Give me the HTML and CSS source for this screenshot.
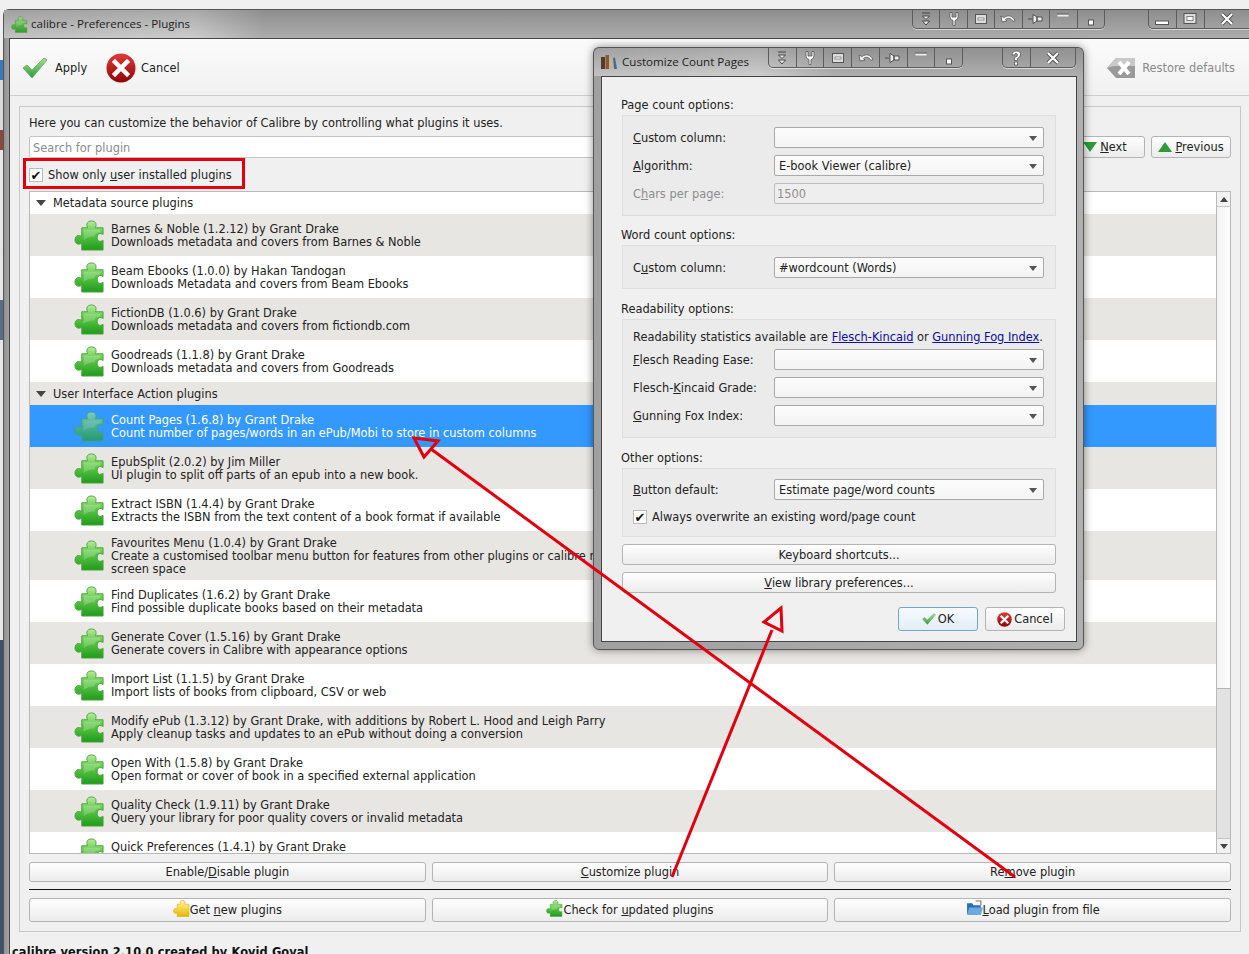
FILE: index.html
```html
<!DOCTYPE html>
<html lang="en">
<head>
<meta charset="utf-8">
<title>calibre - Preferences - Plugins</title>
<link rel="stylesheet" href="styles.css">
</head>
<body>
<svg class="defs" width="0" height="0" aria-hidden="true">
  <defs>
    <linearGradient id="gGreen" x1="0" y1="0" x2="0" y2="1">
      <stop offset="0" stop-color="#b9ecA0"/><stop offset=".4" stop-color="#62c94a"/><stop offset="1" stop-color="#1f9a1c"/>
    </linearGradient>
    <linearGradient id="gYellow" x1="0" y1="0" x2="0" y2="1">
      <stop offset="0" stop-color="#fff6a0"/><stop offset="1" stop-color="#e8b800"/>
    </linearGradient>
    <linearGradient id="gRed" x1="0" y1="0" x2="0" y2="1">
      <stop offset="0" stop-color="#e23a3a"/><stop offset="1" stop-color="#8e0505"/>
    </linearGradient>
    <linearGradient id="gCheck" x1="0" y1="0" x2="0" y2="1">
      <stop offset="0" stop-color="#a8e08c"/><stop offset="1" stop-color="#2f9a3a"/>
    </linearGradient>
    <symbol id="puzzle" viewBox="0 0 32 32">
      <path d="M8 8H14C12.500 5 13 1 18 1C23 1 23.500 5 22 8H30V15C27 13 24 14 24 18C24 22 27 23 30 21V31H8V24C5 26 1 25 1 20.500C1 16 5 15 8 17Z" fill="url(#gGreen)" stroke="#4aa53c" stroke-width="1"/>
      <path d="M10 10H27V13C23 12 21 15 21 17C15 17 11 19 10 21Z" fill="#fff" opacity=".22"/>
    </symbol>
    <symbol id="puzzleY" viewBox="0 0 32 32">
      <path d="M8 8H14C12.500 5 13 1 18 1C23 1 23.500 5 22 8H30V31H8V24C5 26 1 25 1 20.500C1 16 5 15 8 17Z" fill="url(#gYellow)" stroke="#d2a800"/>
    </symbol>
    <symbol id="checkmark" viewBox="0 0 26 22">
      <path d="M1 11L5 8L10 13L22 1L25 3L10 21Z" fill="url(#gCheck)" stroke="#5aa860" stroke-width=".8"/>
    </symbol>
    <symbol id="cross" viewBox="0 0 30 30">
      <circle cx="15" cy="15" r="14.500" fill="url(#gRed)"/>
      <path d="M9 9L21 21M21 9L9 21" stroke="#fff" stroke-width="4.500" stroke-linecap="square"/>
    </symbol>
    <symbol id="i-shade" viewBox="0 0 16 16"><path d="M4 2H12M4.500 5H11.500L8 8.500ZM4.500 10H11.500L8 14Z" fill="#eee" stroke="#444"/></symbol>
    <symbol id="i-wrench" viewBox="0 0 16 16"><path d="M4 1.500V6Q4 9 7 9.500V14.500H9V9.500Q12 9 12 6V1.500H10V6H6V1.500Z" fill="#fff" stroke="#555" stroke-width=".8"/></symbol>
    <symbol id="i-box" viewBox="0 0 16 16"><rect x="2.500" y="3.500" width="11" height="9" fill="#ddd" stroke="#555"/><rect x="5" y="7" width="6" height="2" fill="#fff" stroke="#555" stroke-width=".6"/></symbol>
    <symbol id="i-undo" viewBox="0 0 16 16"><path d="M1 5L2 11L7 10L5.500 8.500C8 6.500 11 7 13 10.500L15 9.500C12.500 4.500 8 3.500 4 6.500Z" fill="#eee" stroke="#555" stroke-width=".8"/></symbol>
    <symbol id="i-pin" viewBox="0 0 16 16"><path d="M0 8H4M5 3.500V12.500L9 10V6ZM9 6H14V10H9Z" fill="#eee" stroke="#444" stroke-width=".9"/></symbol>
    <symbol id="i-dash" viewBox="0 0 16 16"><path d="M2.500 4.500H13.500" stroke="#eee" stroke-width="2"/><path d="M2 3H14" stroke="#555" stroke-width=".8"/></symbol>
    <symbol id="i-dot" viewBox="0 0 16 16"><rect x="5.500" y="9" width="5" height="5" fill="#fff" stroke="#555"/></symbol>
    <symbol id="i-min" viewBox="0 0 16 16"><rect x="1.500" y="10" width="13" height="3.500" fill="#fff" stroke="#555"/></symbol>
    <symbol id="i-max" viewBox="0 0 16 16"><rect x="2" y="2.500" width="12" height="10" fill="#ddd" stroke="#555"/><rect x="5" y="5.500" width="6" height="4" fill="#fff" stroke="#555" stroke-width=".7"/></symbol>
    <symbol id="i-x" viewBox="0 0 16 16"><path d="M3 3L13 13M13 3L3 13" stroke="#555" stroke-width="4"/><path d="M3 3L13 13M13 3L3 13" stroke="#fff" stroke-width="2.200"/></symbol>
    <symbol id="i-help" viewBox="0 0 16 16"><path d="M4 5Q4 1 8.500 1Q13 1 12.500 5Q12 7.500 9.500 8.500V10.500H6.500V7.500Q9.500 6.500 9.500 5Q9.500 3.500 8 3.500Q6.800 3.500 6.800 5ZM6.500 12H9.500V15H6.500Z" fill="#fff" stroke="#555" stroke-width=".8"/></symbol>
  </defs>
</svg>

<div class="window">
  <div class="titlebar">
    <svg class="title-icon"><use href="#puzzle"/></svg>
    <span class="title-text">calibre - Preferences - Plugins</span>
    <div class="strip strip-tools">
      <span class="cell"><svg class="glyph"><use href="#i-shade"/></svg></span>
      <span class="cell"><svg class="glyph"><use href="#i-wrench"/></svg></span>
      <span class="cell"><svg class="glyph"><use href="#i-box"/></svg></span>
      <span class="cell"><svg class="glyph"><use href="#i-undo"/></svg></span>
      <span class="cell"><svg class="glyph"><use href="#i-pin"/></svg></span>
      <span class="cell"><svg class="glyph"><use href="#i-dash"/></svg></span>
      <span class="cell"><svg class="glyph"><use href="#i-dot"/></svg></span>
    </div>
    <div class="strip strip-window">
      <span class="cell"><svg class="glyph"><use href="#i-min"/></svg></span>
      <span class="cell"><svg class="glyph"><use href="#i-max"/></svg></span>
      <span class="cell cell-close"><svg class="glyph"><use href="#i-x"/></svg></span>
    </div>
  </div>

  <div class="client">
    <div class="toolbar">
      <span class="tool tool-apply"><svg class="tool-check"><use href="#checkmark"/></svg>Apply</span>
      <span class="tool tool-cancel"><svg class="tool-cross"><use href="#cross"/></svg>Cancel</span>
      <span class="tool tool-restore">
        <svg class="tool-back" viewBox="0 0 28 20"><path d="M0 10L9 0H28V20H9Z" fill="#9a9a9a"/><path d="M0 10L9 0H28V8H7Z" fill="#c9c9c9"/><path d="M12 4L22 16M22 4L12 16" stroke="#fff" stroke-width="4"/></svg>Restore defaults
      </span>
    </div>

    <div class="panel">
      <p class="intro">Here you can customize the behavior of Calibre by controlling what plugins it uses.</p>
      <div class="search-row">
        <div class="search">Search for plugin</div>
        <span class="btn btn-nav"><svg class="tri" viewBox="0 0 14 10"><path d="M0 0H14L7 10Z" fill="#2f9a3a"/></svg><span><u>N</u>ext</span></span>
        <span class="btn btn-nav"><svg class="tri" viewBox="0 0 14 10"><path d="M0 10H14L7 0Z" fill="#2f9a3a"/></svg><span><u>P</u>revious</span></span>
      </div>
      <div class="check-row">
        <span class="checkbox">✔</span>
        <span>Show only <u>u</u>ser installed plugins</span>
      </div>

      <div class="list">
        <div class="list-body">
          <div class="group-head"><span class="caret"></span>Metadata source plugins</div>
          <div class="row alt"><svg class="puzzle"><use href="#puzzle"/></svg><div class="row-text">Barnes &amp; Noble (1.2.12) by Grant Drake<br>Downloads metadata and covers from Barnes &amp; Noble</div></div>
          <div class="row"><svg class="puzzle"><use href="#puzzle"/></svg><div class="row-text">Beam Ebooks (1.0.0) by Hakan Tandogan<br>Downloads Metadata and covers from Beam Ebooks</div></div>
          <div class="row alt"><svg class="puzzle"><use href="#puzzle"/></svg><div class="row-text">FictionDB (1.0.6) by Grant Drake<br>Downloads metadata and covers from fictiondb.com</div></div>
          <div class="row"><svg class="puzzle"><use href="#puzzle"/></svg><div class="row-text">Goodreads (1.1.8) by Grant Drake<br>Downloads metadata and covers from Goodreads</div></div>
          <div class="group-head group-alt"><span class="caret"></span>User Interface Action plugins</div>
          <div class="row selected"><svg class="puzzle"><use href="#puzzle"/></svg><div class="row-text">Count Pages (1.6.8) by Grant Drake<br>Count number of pages/words in an ePub/Mobi to store in custom columns</div></div>
          <div class="row alt"><svg class="puzzle"><use href="#puzzle"/></svg><div class="row-text">EpubSplit (2.0.2) by Jim Miller<br>UI plugin to split off parts of an epub into a new book.</div></div>
          <div class="row"><svg class="puzzle"><use href="#puzzle"/></svg><div class="row-text">Extract ISBN (1.4.4) by Grant Drake<br>Extracts the ISBN from the text content of a book format if available</div></div>
          <div class="row row-tall alt"><svg class="puzzle"><use href="#puzzle"/></svg><div class="row-text">Favourites Menu (1.0.4) by Grant Drake<br>Create a customised toolbar menu button for features from other plugins or calibre menus to conserve<br>screen space</div></div>
          <div class="row"><svg class="puzzle"><use href="#puzzle"/></svg><div class="row-text">Find Duplicates (1.6.2) by Grant Drake<br>Find possible duplicate books based on their metadata</div></div>
          <div class="row alt"><svg class="puzzle"><use href="#puzzle"/></svg><div class="row-text">Generate Cover (1.5.16) by Grant Drake<br>Generate covers in Calibre with appearance options</div></div>
          <div class="row"><svg class="puzzle"><use href="#puzzle"/></svg><div class="row-text">Import List (1.1.5) by Grant Drake<br>Import lists of books from clipboard, CSV or web</div></div>
          <div class="row alt"><svg class="puzzle"><use href="#puzzle"/></svg><div class="row-text">Modify ePub (1.3.12) by Grant Drake, with additions by Robert L. Hood and Leigh Parry<br>Apply cleanup tasks and updates to an ePub without doing a conversion</div></div>
          <div class="row"><svg class="puzzle"><use href="#puzzle"/></svg><div class="row-text">Open With (1.5.8) by Grant Drake<br>Open format or cover of book in a specified external application</div></div>
          <div class="row alt"><svg class="puzzle"><use href="#puzzle"/></svg><div class="row-text">Quality Check (1.9.11) by Grant Drake<br>Query your library for poor quality covers or invalid metadata</div></div>
          <div class="row"><svg class="puzzle"><use href="#puzzle"/></svg><div class="row-text">Quick Preferences (1.4.1) by Grant Drake<br>&nbsp;</div></div>
        </div>
        <div class="scrollbar">
          <span class="sb-btn"><span class="sb-up"></span></span>
          <span class="sb-handle"></span>
          <span class="sb-trough"></span>
          <span class="sb-btn sb-btn-end"><span class="sb-down"></span></span>
        </div>
      </div>

      <div class="btn-grid btn-grid-top">
        <span class="btn"><span>Enable/<u>D</u>isable plugin</span></span>
        <span class="btn"><span><u>C</u>ustomize plugin</span></span>
        <span class="btn"><span>Re<u>m</u>ove plugin</span></span>
      </div>
      <div class="separator"></div>
      <div class="btn-grid btn-grid-bottom">
        <span class="btn"><svg class="btn-icon"><use href="#puzzleY"/></svg><span>Get <u>n</u>ew plugins</span></span>
        <span class="btn"><svg class="btn-icon"><use href="#puzzle"/></svg><span>Check for <u>u</u>pdated plugins</span></span>
        <span class="btn"><svg class="btn-icon" viewBox="0 0 16 16"><path d="M1 3H6L7 5H14V13H1Z" fill="#2a6fb8"/><path d="M3 7H16L14 14H1Z" fill="#6aa9e2"/><path d="M9 1H14V5" fill="none" stroke="#777"/></svg><span><u>L</u>oad plugin from file</span></span>
      </div>
    </div>
    <div class="version">calibre version 2.10.0 created by Kovid Goyal</div>
  </div>
</div>

<div class="red-box"></div>

<div class="dialog">
  <div class="titlebar dialog-bar">
    <svg class="books" viewBox="0 0 16 14"><rect x="0" y="2" width="4" height="12" fill="#5a3a25"/><rect x="4.500" y="0" width="3.500" height="14" fill="#8a5a35"/><rect x="8.500" y="3" width="3" height="11" fill="#c9b28a"/><path d="M12 3L14 2.500L16 14H13Z" fill="#3f6e9e"/></svg>
    <span class="title-text dialog-title">Customize Count Pages</span>
    <div class="strip strip-tools strip-dialog">
      <span class="cell"><svg class="glyph"><use href="#i-shade"/></svg></span>
      <span class="cell"><svg class="glyph"><use href="#i-wrench"/></svg></span>
      <span class="cell"><svg class="glyph"><use href="#i-box"/></svg></span>
      <span class="cell"><svg class="glyph"><use href="#i-undo"/></svg></span>
      <span class="cell"><svg class="glyph"><use href="#i-pin"/></svg></span>
      <span class="cell"><svg class="glyph"><use href="#i-dash"/></svg></span>
      <span class="cell"><svg class="glyph"><use href="#i-dot"/></svg></span>
    </div>
    <div class="strip strip-help">
      <span class="cell"><svg class="glyph"><use href="#i-help"/></svg></span>
      <span class="cell cell-close"><svg class="glyph"><use href="#i-x"/></svg></span>
    </div>
  </div>
  <div class="dialog-body">
    <div class="sec-title sec-first">Page count options:</div>
    <div class="box">
      <div class="form-row"><label class="form-label"><u>C</u>ustom column:</label><div class="combo"></div></div>
      <div class="form-row"><label class="form-label"><u>A</u>lgorithm:</label><div class="combo">E-book Viewer (calibre)</div></div>
      <div class="form-row is-disabled"><label class="form-label">C<u>h</u>ars per page:</label><div class="spin">1500</div></div>
    </div>

    <div class="sec-title sec-word">Word count options:</div>
    <div class="box box-word">
      <div class="form-row"><label class="form-label">C<u>u</u>stom column:</label><div class="combo">#wordcount (Words)</div></div>
    </div>

    <div class="sec-title">Readability options:</div>
    <div class="box box-read">
      <p class="read-note">Readability statistics available are <a class="link">Flesch-Kincaid</a> or <a class="link">Gunning Fog Index</a>.</p>
      <div class="form-row"><label class="form-label"><u>F</u>lesch Reading Ease:</label><div class="combo"></div></div>
      <div class="form-row"><label class="form-label">Flesch-<u>K</u>incaid Grade:</label><div class="combo"></div></div>
      <div class="form-row"><label class="form-label"><u>G</u>unning Fox Index:</label><div class="combo"></div></div>
    </div>

    <div class="sec-title">Other options:</div>
    <div class="box box-other">
      <div class="form-row"><label class="form-label"><u>B</u>utton default:</label><div class="combo">Estimate page/word counts</div></div>
      <div class="overwrite"><span class="checkbox">✔</span><span>Always overwrite an existing word/page count</span></div>
    </div>

    <div class="wide-btns">
      <span class="btn"><span>Keyboard shortcuts...</span></span>
      <span class="btn"><span><u>V</u>iew library preferences...</span></span>
    </div>
    <div class="dialog-actions">
      <span class="btn btn-action btn-default"><svg class="act-check"><use href="#checkmark"/></svg><span>OK</span></span>
      <span class="btn btn-action"><svg class="act-cross"><use href="#cross"/></svg><span>Cancel</span></span>
    </div>
  </div>
</div>

<svg class="annotations" viewBox="0 0 1249 954" aria-hidden="true">
  <path d="M1015 877L431 449" />
  <path class="head" d="M414 438L438 441L424 457Z"/>
  <path d="M672 877L772 630" />
  <path class="head" d="M781 608L764 622L782 631Z"/>
</svg>
</body>
</html>
```
FILE: styles.css
```css
* { box-sizing: border-box; }
html, body { margin: 0; padding: 0; }
body {
  width: 1249px;
  height: 954px;
  overflow: hidden;
  position: relative;
  font-family: "DejaVu Sans", Verdana, sans-serif;
  font-size: 11.4px;
  color: #222;
  background: linear-gradient(180deg, #f0f0f0 0 60px, #3a78c0 60px 80px, #d8d8d8 80px 130px, #8a4a3a 130px 150px, #e6e6e6 150px 300px, #5c6c88 300px 340px, #e6e6e6 340px 640px, #39536f 640px 954px);
}
.defs { position: absolute; }
p { margin: 0; }

.window {
  margin: 9px 0 0 3px;
  width: 1246px;
  height: 945px;
  border: 1px solid #555;
  border-right: 0;
  border-bottom: 0;
  border-top-left-radius: 6px;
  background: linear-gradient(90deg, #8f8f8f, #a8a8a8 6px);
}
.titlebar {
  height: 28px;
  display: flex;
  align-items: flex-start;
  background: linear-gradient(90deg, #bdbdbd 0, #c8c8c8 190px, #a5a5a5 260px);
  position: relative;
}
.titlebar::after {
  content: "";
  position: absolute;
  inset: 0;
  background: linear-gradient(180deg, rgba(60,60,60,.22), rgba(255,255,255,.08));
  pointer-events: none;
}
.title-icon { width: 17px; height: 17px; margin: 6px 3px 0 7px; flex: none; }
.title-text {
  font-family: "Open Sans", sans-serif;
  font-size: 11.6px;
  line-height: 28px;
  color: #222;
  white-space: nowrap;
  position: relative;
  z-index: 1;
}
.strip {
  display: flex;
  height: 19px;
  border: 1px solid #5c5c5c;
  border-top: 0;
  border-radius: 0 0 5px 5px;
  box-shadow: 0 1px 0 rgba(255,255,255,.55);
  position: relative;
  z-index: 1;
  flex: none;
}
.strip-tools { margin-left: auto; width: 193px; }
.strip-window { margin-left: 43px; width: 101px; border-right: 0; border-bottom-right-radius: 0; }
.cell {
  flex: 1 1 0;
  display: flex;
  align-items: center;
  justify-content: center;
  border-right: 1px solid #5c5c5c;
}
.cell:last-child { border-right: 0; }
.cell-close { flex: 1.65 1 0; }
.glyph { width: 16px; height: 16px; }

.client {
  margin-left: 5px;
  height: 917px;
  border-top: 1px solid #444;
  border-left: 1px solid #444;
  background: #f0f0f0;
  overflow: hidden;
}
.toolbar {
  height: 57px;
  display: flex;
  align-items: center;
  border-bottom: 1px solid #cfcfcf;
  background: linear-gradient(180deg, #fbfbfb, #f1f1f1);
  padding-left: 12px;
  padding-top: 1px;
}
.tool { display: flex; align-items: center; white-space: nowrap; line-height: 16px; }
.tool-check { width: 26px; height: 22px; margin-right: 7px; }
.tool-apply { width: 84px; }
.tool-cross { width: 30px; height: 30px; margin-right: 5px; }
.tool-restore { margin-left: auto; margin-right: 14px; color: #8a8a8a; }
.tool-back { width: 28px; height: 20px; margin-right: 7px; }

.panel {
  width: 1222px;
  height: 826px;
  margin: 10px 0 0 9px;
  border: 1px solid #c8c8c8;
  padding: 9px 9px 0;
}
.intro { height: 14px; line-height: 15px; }
.search-row { display: flex; gap: 6px; height: 22px; margin-top: 6px; }
.search {
  flex: 1;
  background: #fff;
  border: 1px solid #c4c4c4;
  border-radius: 2px;
  padding-left: 3px;
  line-height: 22px;
  color: #8c8c8c;
}
.btn {
  display: flex;
  align-items: center;
  justify-content: center;
  border: 1px solid #b4b4b4;
  border-radius: 3px;
  background: linear-gradient(180deg, #fefefe, #ececec);
  white-space: nowrap;
  min-width: 0;
}
.btn-nav { width: 80px; flex: none; }
.tri { width: 14px; height: 10px; margin-right: 3px; }
.check-row { height: 33px; display: flex; align-items: center; gap: 5px; }
.checkbox {
  width: 14px;
  height: 14px;
  flex: none;
  background: #fff;
  border: 1px solid #bcbcbc;
  color: #111;
  font-size: 13px;
  line-height: 13px;
  text-align: center;
}

.list {
  height: 663px;
  display: flex;
  border: 1px solid #b9b9b9;
  background: #fff;
}
.list-body { flex: 1; overflow: hidden; min-width: 0; }
.group-head {
  height: 22px;
  display: flex;
  align-items: center;
  padding-left: 6px;
}
.group-alt { height: 23px; background: #e8e6e3; }
.caret {
  width: 0;
  height: 0;
  border-left: 5px solid transparent;
  border-right: 5px solid transparent;
  border-top: 6px solid #444;
  margin-right: 7px;
}
.row {
  height: 42px;
  display: flex;
  align-items: center;
  flex: none;
  overflow: hidden;
}
.row-tall { height: 49px; }
.row.alt { background: #e8e6e3; }
.row.selected { background: #3399ff; color: #fff; }
.row.selected .puzzle { opacity: .6; }
.puzzle { width: 31px; height: 31px; margin-left: 44px; flex: none; }
.row-text { margin-left: 6px; padding-top: 1px; line-height: 13px; white-space: nowrap; }

.scrollbar {
  width: 14px;
  flex: none;
  display: flex;
  flex-direction: column;
  border-left: 1px solid #b9b9b9;
  background: #f2f2f2;
}
.sb-btn {
  height: 15px;
  flex: none;
  display: flex;
  align-items: center;
  justify-content: center;
  border-bottom: 1px solid #c4c4c4;
}
.sb-btn-end { border-bottom: 0; border-top: 1px solid #c4c4c4; }
.sb-up, .sb-down {
  border-left: 4px solid transparent;
  border-right: 4px solid transparent;
}
.sb-up { border-bottom: 5px solid #444; }
.sb-down { border-top: 5px solid #444; }
.sb-handle {
  height: 482px;
  flex: none;
  background: linear-gradient(90deg, #f4f4f4, #fdfdfd);
  border-bottom: 1px solid #b4b4b4;
}
.sb-trough { flex: 1; background: #e2e2e2; }

.btn-grid { display: grid; grid-template-columns: 1fr 1fr 1fr; gap: 6px; }
.btn-grid-top { height: 20px; margin-top: 8px; }
.btn-grid-bottom { height: 24px; }
.separator { height: 1px; background: #111; margin: 7px 0 8px; }
.btn-icon { width: 17px; height: 17px; flex: none; margin-top: -3px; }
.version {
  margin: 13px 0 0 2px;
  font-weight: 700;
  line-height: 14px;
  letter-spacing: .1px;
  color: #111;
  white-space: nowrap;
}

.red-box {
  position: absolute;
  left: 23px;
  top: 158px;
  width: 222px;
  height: 31px;
  border: 3px solid #e2000f;
}

.dialog {
  position: absolute;
  left: 593px;
  top: 47px;
  width: 491px;
  height: 603px;
  border: 1px solid #555;
  border-radius: 6px;
  background: linear-gradient(90deg, #a0a0a0, #b0b0b0);
  box-shadow: 0 0 8px rgba(0,0,0,.45);
  padding: 0 6px 7px 7px;
}
.dialog-bar {
  height: 28px;
  margin: 0 -6px 0 -7px;
  border-radius: 6px 6px 0 0;
  background: linear-gradient(90deg, #bdbdbd 0, #c9c9c9 165px, #a8a8a8 240px);
}
.books { width: 16px; height: 14px; margin: 7px 5px 0 7px; flex: none; position: relative; z-index: 1; }
.dialog-title { line-height: 27px; }
.strip-dialog { margin-left: auto; width: 195px; height: 20px; }
.strip-help { margin-left: 39px; margin-right: 7px; width: 74px; height: 20px; }
.dialog-body {
  height: 566px;
  background: #f0f0f0;
  border: 1px solid #444;
  padding: 19px 20px 0 19px;
}
.sec-title { height: 17px; line-height: 18px; margin: 11px 0 2px; }
.sec-first { margin-top: 0; }
.sec-word { margin-top: 10px; }
.box {
  margin-left: 1px;
  background: #ebebeb;
  border: 1px solid #dedede;
  padding: 11px 11px 11px 10px;
  display: flex;
  flex-direction: column;
  gap: 7px;
}
.box-word { padding-bottom: 10px; }
.box-read { padding-top: 10px; }
.box-other { padding-top: 10px; padding-bottom: 10px; }
.read-note { height: 14px; line-height: 15px; margin-bottom: -2px; white-space: nowrap; }
.link { color: #0b0b9e; text-decoration: underline; }
.form-row { display: flex; align-items: center; height: 21px; }
.form-label { width: 141px; flex: none; padding-top: 1px; white-space: nowrap; }
.is-disabled { color: #8d8d8d; }
.combo, .spin {
  flex: 1;
  height: 21px;
  border: 1px solid #a9a9a9;
  border-radius: 2px;
  line-height: 20px;
  padding-left: 4px;
  position: relative;
  white-space: nowrap;
}
.combo { background: linear-gradient(180deg, #fdfdfd, #f3f3f3); }
.combo::after {
  content: "";
  position: absolute;
  right: 6px;
  top: 8px;
  border-left: 4px solid transparent;
  border-right: 4px solid transparent;
  border-top: 5px solid #555;
}
.spin { background: #eeeeee; border-color: #bdbdbd; padding-left: 2px; }
.overwrite { display: flex; align-items: center; gap: 5px; height: 14px; margin: 3px 0 2px; }
.wide-btns {
  margin: 7px 0 0 1px;
  display: flex;
  flex-direction: column;
  gap: 7px;
}
.wide-btns .btn { height: 21px; }
.dialog-actions {
  display: flex;
  justify-content: flex-end;
  gap: 7px;
  margin: 14px -9px 0 0;
}
.btn-action { height: 24px; width: 80px; }
.btn-default {
  border-color: #6fa8cf;
  background: linear-gradient(180deg, #f6fbff, #e3edf5);
}
.act-check { width: 14px; height: 12px; margin-right: 2px; }
.act-cross { width: 15px; height: 15px; margin-right: 2px; }

.annotations {
  position: absolute;
  left: 0;
  top: 0;
  width: 1249px;
  height: 954px;
  pointer-events: none;
}
.annotations path {
  fill: none;
  stroke: #e2000f;
  stroke-width: 3;
}
```
